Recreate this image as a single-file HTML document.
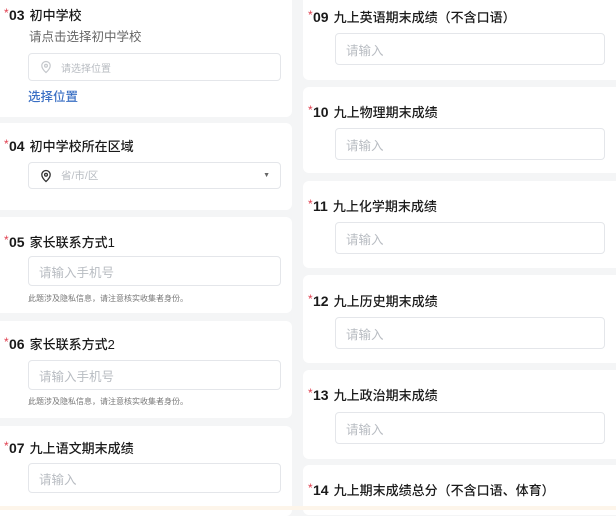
<!DOCTYPE html>
<html><head><meta charset="utf-8"><style>
*{margin:0;padding:0;box-sizing:border-box}
body{width:616px;height:510px;background:#f4f5f6;position:relative;overflow:hidden;font-family:"Liberation Sans","Noto Sans CJK SC",sans-serif}
.c{position:absolute;background:#fff;border-radius:6px}
.t{position:absolute;font-size:13px;color:#1a1a1a;white-space:nowrap;line-height:16px;font-weight:500}
.t b{font-weight:bold;font-size:14px;margin-right:5px}
.t i{position:absolute;left:-5px;top:-2px;color:#e04050;font-style:normal;font-size:12px}
.in{position:absolute;background:#fff;border:1px solid #e4e6ea;border-radius:4px;font-size:12.5px;color:#b8bcc2;padding-left:10px;display:flex;align-items:center}
.n{position:absolute;font-size:8px;color:#777;white-space:nowrap}
</style></head><body>
<div class="c" style="left:-6px;top:-6px;width:298px;height:123px"></div>
<div class="c" style="left:-6px;top:123px;width:298px;height:87px"></div>
<div class="c" style="left:-6px;top:217px;width:298px;height:96px"></div>
<div class="c" style="left:-6px;top:321px;width:298px;height:97px"></div>
<div class="c" style="left:-6px;top:426px;width:298px;height:90px"></div>

<div class="c" style="left:303px;top:-6px;width:320px;height:86px"></div>
<div class="c" style="left:303px;top:87px;width:320px;height:86px"></div>
<div class="c" style="left:303px;top:181px;width:320px;height:87px"></div>
<div class="c" style="left:303px;top:275px;width:320px;height:88px"></div>
<div class="c" style="left:303px;top:370px;width:320px;height:89px"></div>
<div class="c" style="left:303px;top:465px;width:320px;height:50px"></div>

<div class="t" style="left:9px;top:7px"><i>*</i><b>03</b>初中学校</div>
<div class="t" style="left:29px;top:29px;color:#666;font-size:12.5px;font-weight:normal">请点击选择初中学校</div>
<div class="in" style="left:28px;top:53px;width:253px;height:28px;font-size:10px"><svg width="14" height="14" viewBox="0 0 14 14" style="margin-right:8px"><path d="M7 1.5a4.2 4.2 0 0 0-4.2 4.2c0 3 4.2 6.8 4.2 6.8s4.2-3.8 4.2-6.8A4.2 4.2 0 0 0 7 1.5z" fill="none" stroke="#c5c8cc" stroke-width="1.2"/><circle cx="7" cy="5.8" r="1.4" fill="none" stroke="#c5c8cc" stroke-width="1.2"/></svg>请选择位置</div>
<div class="t" style="left:28px;top:89px;color:#3a6fc4;font-size:12.5px">选择位置</div>

<div class="t" style="left:9px;top:138px"><i>*</i><b>04</b>初中学校所在区域</div>
<div class="in" style="left:28px;top:162px;width:253px;height:27px;font-size:10.5px"><svg width="14" height="14" viewBox="0 0 14 14" style="margin-right:8px"><path d="M7 1.5a4.2 4.2 0 0 0-4.2 4.2c0 3 4.2 6.8 4.2 6.8s4.2-3.8 4.2-6.8A4.2 4.2 0 0 0 7 1.5z" fill="none" stroke="#333" stroke-width="1.3"/><circle cx="7" cy="5.8" r="1.4" fill="none" stroke="#333" stroke-width="1.3"/></svg>省/市/区<span style="position:absolute;right:10px;font-size:7px;color:#666">▼</span></div>

<div class="t" style="left:9px;top:234px"><i>*</i><b>05</b>家长联系方式1</div>
<div class="in" style="left:28px;top:256px;width:253px;height:30px">请输入手机号</div>
<div class="n" style="left:28px;top:293px">此题涉及隐私信息，请注意核实收集者身份。</div>

<div class="t" style="left:9px;top:336px"><i>*</i><b>06</b>家长联系方式2</div>
<div class="in" style="left:28px;top:360px;width:253px;height:30px">请输入手机号</div>
<div class="n" style="left:28px;top:396px">此题涉及隐私信息，请注意核实收集者身份。</div>

<div class="t" style="left:9px;top:440px"><i>*</i><b>07</b>九上语文期末成绩</div>
<div class="in" style="left:28px;top:463px;width:253px;height:30px">请输入</div>

<div class="t" style="left:313px;top:9px"><i>*</i><b>09</b>九上英语期末成绩（不含口语）</div>
<div class="in" style="left:335px;top:33px;width:270px;height:32px">请输入</div>
<div class="t" style="left:313px;top:104px"><i>*</i><b>10</b>九上物理期末成绩</div>
<div class="in" style="left:335px;top:128px;width:270px;height:32px">请输入</div>
<div class="t" style="left:313px;top:198px"><i>*</i><b>11</b>九上化学期末成绩</div>
<div class="in" style="left:335px;top:222px;width:270px;height:32px">请输入</div>
<div class="t" style="left:313px;top:293px"><i>*</i><b>12</b>九上历史期末成绩</div>
<div class="in" style="left:335px;top:317px;width:270px;height:32px">请输入</div>
<div class="t" style="left:313px;top:387px"><i>*</i><b>13</b>九上政治期末成绩</div>
<div class="in" style="left:335px;top:412px;width:270px;height:32px">请输入</div>
<div class="t" style="left:313px;top:482px"><i>*</i><b>14</b>九上期末成绩总分（不含口语、体育）</div>

<div style="position:absolute;left:0;top:506px;width:616px;height:4px;background:#fdf5ea"></div>
</body></html>
